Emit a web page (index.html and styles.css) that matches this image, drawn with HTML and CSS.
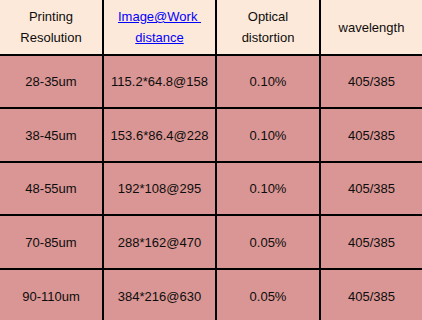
FILE: index.html
```html
<!DOCTYPE html>
<html lang="en">
<head>
<meta charset="utf-8">
<title>Printing resolution table</title>
<link rel="stylesheet" href="styles.css">
</head>
<body>
<div class="spec-table" role="table">
  <div class="cell head" role="columnheader">Printing<br>Resolution</div>
  <div class="cell head" role="columnheader"><a class="link" href="#">Image@Work&nbsp;<br>distance</a></div>
  <div class="cell head" role="columnheader">Optical<br>distortion</div>
  <div class="cell head" role="columnheader">wavelength</div>

  <div class="cell" role="cell">28-35um</div>
  <div class="cell" role="cell">115.2*64.8@158</div>
  <div class="cell" role="cell">0.10%</div>
  <div class="cell" role="cell">405/385</div>

  <div class="cell" role="cell">38-45um</div>
  <div class="cell" role="cell">153.6*86.4@228</div>
  <div class="cell" role="cell">0.10%</div>
  <div class="cell" role="cell">405/385</div>

  <div class="cell" role="cell">48-55um</div>
  <div class="cell" role="cell">192*108@295</div>
  <div class="cell" role="cell">0.10%</div>
  <div class="cell" role="cell">405/385</div>

  <div class="cell" role="cell">70-85um</div>
  <div class="cell" role="cell">288*162@470</div>
  <div class="cell" role="cell">0.05%</div>
  <div class="cell" role="cell">405/385</div>

  <div class="cell" role="cell">90-110um</div>
  <div class="cell" role="cell">384*216@630</div>
  <div class="cell" role="cell">0.05%</div>
  <div class="cell" role="cell">405/385</div>
</div>
</body>
</html>
```

FILE: styles.css
```css
html, body {
  margin: 0;
  padding: 0;
  overflow: hidden;
  background: #da9694;
}

.spec-table {
  display: grid;
  grid-template-columns: 102px 111px 102px 1fr;
  grid-template-rows: 54px 51px 52px 51px 52px 52px;
  gap: 2px;
  background: #000;
  width: 422px;
  font-family: "Liberation Sans", Arial, sans-serif;
  font-size: 13px;
  line-height: 21px;
  color: #0d0d0d;
}

.cell {
  display: flex;
  align-items: center;
  justify-content: center;
  text-align: center;
  background: #da9694;
}

.cell.head {
  background: #fde9d9;
}

.link {
  color: #0000ff;
  text-decoration: underline;
}
```
